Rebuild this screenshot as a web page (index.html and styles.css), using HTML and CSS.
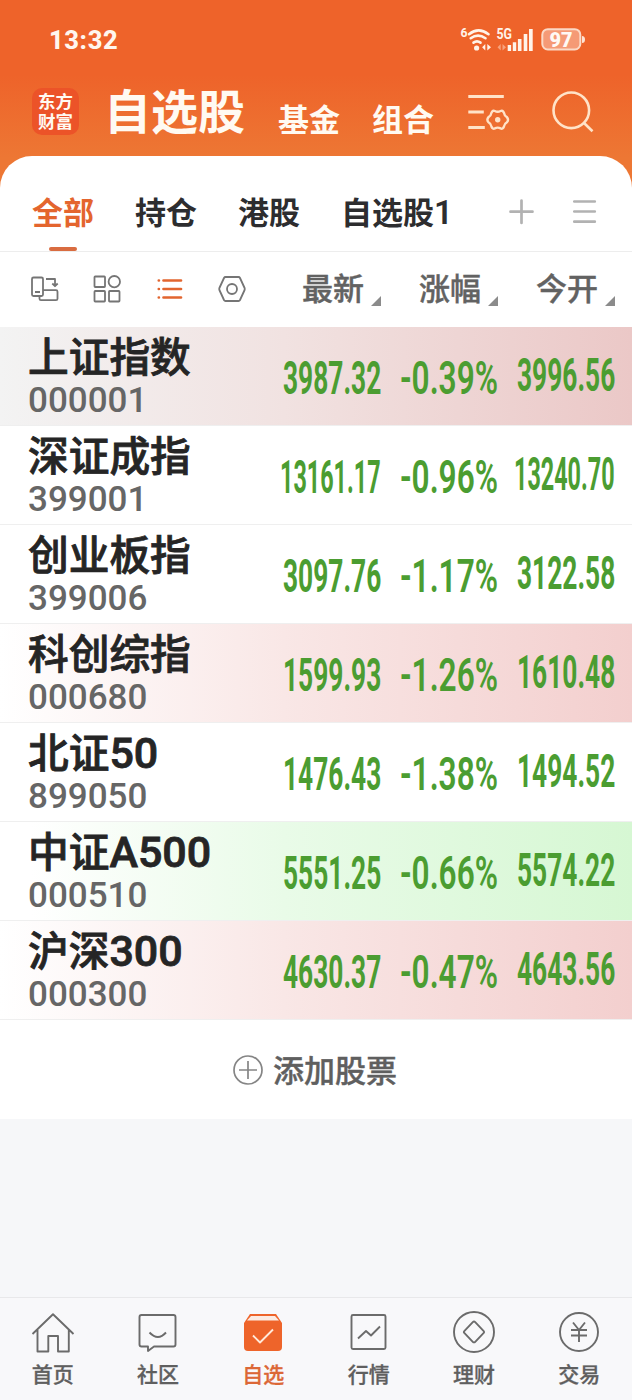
FILE: index.html
```html
<!DOCTYPE html>
<html lang="zh-CN">
<head>
<meta charset="utf-8">
<title>自选股</title>
<link rel="stylesheet" href="styles.css">
</head>
<body>
<div class="app">
  <header class="top">
    <div class="status">
      <span class="clock">13:32</span>
      <svg class="status-icons" width="130" height="32" viewBox="458 24 130 32">
        <g fill="none" stroke="#fff3e9" stroke-width="2.6" stroke-linecap="round">
          <path d="M469 34.2Q478.500 26.500 488.500 34.200"/><path d="M470.700 38.200Q478 33 485.500 38.200"/><path d="M473.500 42.600Q477 40 480.500 42.600"/>
        </g>
        <circle cx="476.600" cy="48" r="2.600" fill="#fff3e9"/>
        <path d="M485.300 44v6.500l-3.200-3.300M487.300 50.500V44l3.700 3.300z" fill="#fff3e9"/>
        <path d="M500.700 44v6.500l-3.200-3.300M502.500 50.500V44l3.500 3.300z" fill="#f7a27c"/>
        <text class="sig" x="460.500" y="37.200" font-size="12.500" textLength="7" lengthAdjust="spacingAndGlyphs">6</text>
        <text class="sig" x="496.500" y="39.200" font-size="14.500" textLength="15.500" lengthAdjust="spacingAndGlyphs">5G</text>
        <path d="M507.700 45h3.400v6h-3.400zM512.800 42.300h3.400V51h-3.400zM517.900 39h3.600v12h-3.600zM523.700 34h3.600v17h-3.600zM529 29h3.700v22H529z" fill="#fff3e9"/>
        <rect x="542.300" y="29.200" width="38" height="20.300" rx="5.500" fill="#f59a76" stroke="#fbd9c6" stroke-width="2"/>
        <path d="M582 36q3 0 3 3.500t-3 3.500z" fill="#fde3d4"/>
        <text class="batt" x="549.500" y="46.500" font-size="20" textLength="23" lengthAdjust="spacingAndGlyphs">97</text>
      </svg>
    </div>
    <div class="titlebar">
      <div class="logo"><span>东方</span><span>财富</span></div>
      <h1>自选股</h1>
      <span class="sub">基金</span>
      <span class="sub sub-2">组合</span>
      <svg class="ic-filter" width="44" height="42" viewBox="466 92 44 42" fill="none" stroke="#ffe3c8" stroke-width="2.800">
        <path d="M468.300 96.500h35.500M468.300 112h15.500M468.300 127.500h16.500"/>
        <path d="M491.500 112.700q1.200-2.700 3.300-1.700 2.900 1.500 5.800 0 2.100-1 3.300 1.700.4 3 3 4.400 2.200 2.600 0 5.200-2.600 1.400-3 4.400-1.200 2.700-3.300 1.700-2.900-1.500-5.800 0-2.100 1-3.300-1.700-.4-3-3-4.400-2.200-2.600 0-5.200 2.600-1.400 3-4.400z" stroke-width="2.400"/>
        <circle cx="497.700" cy="119.700" r="2.700" fill="#ffe3c8" stroke="none"/>
      </svg>
      <svg class="ic-search" width="46" height="46" viewBox="550 89 46 46" fill="none" stroke="#ffe3c8" stroke-width="2.600">
        <circle cx="571.300" cy="110.300" r="17.800"/><path d="M583.500 122.500l9 8.800"/>
      </svg>
    </div>
  </header>

  <main class="card">
    <nav class="tabs">
      <span class="tab active">全部</span><span class="tab">持仓</span><span class="tab">港股</span><span class="tab">自选股<span class="one">1</span></span>
      <svg class="tab-tools" width="92" height="30" viewBox="506 197 92 30" fill="none" stroke="#b2b2b2" stroke-width="2.700" stroke-linecap="round">
        <path d="M510.500 211.700h22M521.500 200.500v22.500M574.300 201.500h20.500M574.300 211.500h20.500M574.300 221.700h20.500"/>
      </svg>
    </nav>

    <div class="columns">
      <svg class="views" width="220" height="34" viewBox="28 272 220 34" fill="none" stroke="#757575" stroke-width="1.800" stroke-linejoin="round">
        <rect x="32" y="277.500" width="11" height="18.500" rx="1.500"/><path d="M35 292h5" stroke-width="2"/>
        <path d="M46 279h9v6.500M52.300 283.500l2.700 2.700 2.700-2.700M47.500 290.200h8.500q1.500 0 1.500 1.500v7q0 1.500-1.500 1.500H41q-1.500 0-1.500-1.500V296M43 290.200h4.500"/>
        <rect x="94.500" y="276.500" width="10.500" height="10.500" rx=".7"/><circle cx="114.300" cy="281.700" r="5.700"/><rect x="94.500" y="291" width="10.500" height="10.500" rx=".7"/><rect x="109" y="291" width="10.500" height="10.500" rx=".7"/>
        <g stroke="#e2652f" stroke-width="2.700" stroke-linecap="round"><path d="M163.500 280.500h17.500M163.500 289h17.500M163.500 297.500h17.500M158.800 280.500h.1M158.800 289h.1M158.800 297.500h.1"/></g>
        <path d="M225.500 277h13q1 0 1.500 1l4.600 10q.4 1 0 2l-4.600 10q-.5 1-1.500 1h-13q-1 0-1.500-1l-4.600-10q-.4-1 0-2l4.600-10q.5-1 1.500-1z"/><circle cx="232" cy="289" r="5"/>
      </svg>
      <span class="col">最新</span><span class="col">涨幅</span><span class="col">今开</span>
    </div>

    <section class="list">
      <article class="row tint-gray"><div class="id"><b>上证指数</b><i>000001</i></div>
        <span class="num">3987.32</span><span class="num pct">-0.39%</span><span class="num open">3996.56</span></article>
      <article class="row"><div class="id"><b>深证成指</b><i>399001</i></div>
        <span class="num long">13161.17</span><span class="num pct">-0.96%</span><span class="num open long">13240.70</span></article>
      <article class="row"><div class="id"><b>创业板指</b><i>399006</i></div>
        <span class="num">3097.76</span><span class="num pct">-1.17%</span><span class="num open">3122.58</span></article>
      <article class="row tint-red"><div class="id"><b>科创综指</b><i>000680</i></div>
        <span class="num">1599.93</span><span class="num pct">-1.26%</span><span class="num open">1610.48</span></article>
      <article class="row"><div class="id"><b>北证<span class="lat">50</span></b><i>899050</i></div>
        <span class="num">1476.43</span><span class="num pct">-1.38%</span><span class="num open">1494.52</span></article>
      <article class="row tint-green"><div class="id"><b>中证<span class="lat">A500</span></b><i>000510</i></div>
        <span class="num">5551.25</span><span class="num pct">-0.66%</span><span class="num open">5574.22</span></article>
      <article class="row tint-red"><div class="id"><b>沪深<span class="lat">300</span></b><i>000300</i></div>
        <span class="num">4630.37</span><span class="num pct">-0.47%</span><span class="num open">4643.56</span></article>
    </section>

    <div class="add">
      <svg width="32" height="32" viewBox="0 0 32 32" fill="none" stroke="#858585" stroke-width="1.700"><circle cx="16" cy="16" r="14"/><path d="M7 16h18M16 7v18"/></svg>
      <span>添加股票</span>
    </div>
  </main>

  <footer class="bottom">
    <div class="item"><svg width="44" height="44" viewBox="0 0 44 44"><path d="M1.500 24L22 4.300 42.500 24M6.500 20v21.500h10.800V26H27v15.500h10.800V20"/></svg><span>首页</span></div>
    <div class="item"><svg width="44" height="44" viewBox="0 0 44 44"><path d="M5.500 5h32q2 0 2 2v27.500q0 2-2 2H18l-6 4.500v-4.500H5.500q-2 0-2-2V7q0-2 2-2z"/><path d="M13.500 22.500q8.500 9 16.500 0"/></svg><span>社区</span></div>
    <div class="item on"><svg width="44" height="44" viewBox="0 0 44 44"><path d="M3 13L9 4h26l6 9v24q0 4-4 4H7q-4 0-4-4z" fill="#ee642a" stroke="none"/><path d="M6 10.500L10 6h24l4 4.500z" fill="#fcebe2" stroke="none"/><path d="M12 25.500l7 7 13-13" stroke="#ffe9da"/></svg><span>自选</span></div>
    <div class="item"><svg width="44" height="44" viewBox="0 0 44 44"><rect x="4.500" y="5" width="34" height="34" rx="1.500"/><path d="M11 28.500l8-7.500 5 4.500 9-9"/></svg><span>行情</span></div>
    <div class="item"><svg width="44" height="44" viewBox="0 0 44 44"><circle cx="22" cy="22" r="20"/><path d="M20.800 12.200q1.200-1.200 2.400 0l8.300 8.600q1.200 1.200 0 2.400l-8.300 8.600q-1.200 1.200-2.400 0l-8.300-8.600q-1.200-1.200 0-2.400z"/></svg><span>理财</span></div>
    <div class="item"><svg width="44" height="44" viewBox="0 0 44 44"><circle cx="22" cy="22" r="19"/><path d="M16 12.500l6 7.500 6-7.500M14 20h16M14 25.500h16M22 20v12"/></svg><span>交易</span></div>
  </footer>
</div>
</body>
</html>
```
FILE: styles.css
```css
* { box-sizing: border-box; }
body {
  margin: 0;
  background: #f6f7f9;
  font-family: "Noto Sans CJK SC", sans-serif;
}
.app {
  width: 632px;
  height: 1400px;
  overflow: hidden;
  display: flex;
  flex-direction: column;
  background: linear-gradient(#ee632a 0, #ee632a 75px, #ed7734 158px, #ed7734 200px, #f6f7f9 200px);
}
svg { display: block; flex: none; }
.top { height: 156px; color: #fffaf2; }
.status {
  height: 80px;
  padding: 24px 44px 24px 49px;
  display: flex;
  justify-content: space-between;
  align-items: center;
}
.clock {
  font: 800 25.5px/32px Roboto, sans-serif;
  letter-spacing: 0.6px;
  color: #fff6ee;
}
.sig { font-family: Roboto, sans-serif; font-weight: 700; fill: #fff3e9; }
.batt { font-family: Roboto, sans-serif; font-weight: 900; fill: #fff9f4; }
.titlebar {
  height: 76px;
  padding-left: 32px;
  display: flex;
  align-items: flex-start;
}
.logo {
  width: 47px;
  height: 47px;
  margin-top: 8px;
  padding-top: 3px;
  border-radius: 10px;
  background: #ec5328;
  display: flex;
  flex-direction: column;
  align-items: center;
  font-weight: 700;
  font-size: 17.5px;
  line-height: 20px;
}
h1 {
  margin: -2px 0 0 25px;
  font-size: 47px;
  line-height: 62px;
  font-weight: 700;
}
.sub {
  margin: 18px 0 0 33px;
  font-size: 31px;
  line-height: 40px;
  font-weight: 700;
}
.sub-2 { margin-left: 32px; }
.ic-filter { margin: 12px 0 0 32px; }
.ic-search { margin: 9px 0 0 40px; }

.card {
  background: #fff;
  border-radius: 32px 32px 0 0;
  height: 963px;
}
.tabs {
  height: 96px;
  padding: 33px 0 0 32px;
  border-bottom: 1px solid #ededed;
  display: flex;
  font-size: 31px;
  line-height: 44px;
  font-weight: 700;
  color: #2d2d2f;
}
.tab { margin-right: 41px; height: 63px; }
.active {
  color: #e4652e;
  display: flex;
  flex-direction: column;
  align-items: center;
}
.active::after {
  content: "";
  width: 28px;
  height: 4px;
  margin-top: 14px;
  border-radius: 2px;
  background: #d96c40;
}
.one { font-family: Roboto, sans-serif; font-size: 33px; font-weight: 600; }
.tab-tools { margin: 8px 0 0 12px; }
.columns {
  height: 75px;
  padding: 0 17px 0 28px;
  display: flex;
  align-items: flex-start;
}
.views { margin: 20px 54px 0 0; }
.col {
  width: 117px;
  margin-top: 13px;
  font-size: 31px;
  line-height: 44px;
  font-weight: 500;
  -webkit-text-stroke: 0.4px;
  color: #626262;
  display: flex;
  align-items: flex-end;
  flex: none;
}
.col::after {
  content: "";
  margin: 0 0 3px 7px;
  border-left: 10px solid transparent;
  border-bottom: 10px solid #8b8b8b;
}
.row {
  height: 99px;
  padding-left: 28px;
  border-bottom: 1px solid #efefef;
  display: grid;
  grid-template-columns: 255px 117px 117px 99px;
}
.tint-gray { background: linear-gradient(90deg, #f3f3f3, #f1e2e1 45%, #ebc8c7); }
.tint-red { background: linear-gradient(90deg, #fff, #f9e7e6 45%, #f3cfce); }
.tint-green { background: linear-gradient(90deg, #fff 5%, #e9fbe8 45%, #d6f7d3); }
.id { display: flex; flex-direction: column; }
.id b {
  height: 57px;
  font-size: 40.7px;
  line-height: 55px;
  font-weight: 500;
  -webkit-text-stroke: 0.8px;
  color: #252525;
  white-space: nowrap;
}
.id .lat {
  font-family: Roboto, sans-serif;
  font-size: 43px;
  font-weight: 500;
}
.id i {
  font: 500 35px/33px Roboto, sans-serif;
  color: #666;
}
.num {
  width: max-content;
  margin-top: 27px;
  font: 700 47px/47px Roboto, sans-serif;
  color: #4b9d31;
  white-space: nowrap;
  transform: scaleX(0.56);
  transform-origin: 0 0;
}
.num.long { margin-left: -3px; transform: scaleX(0.497); }
.num.pct { font-weight: 600; transform: scaleX(0.672); }
.num.open { margin-top: 24px; }
.add {
  height: 99px;
  padding-right: 3px;
  display: flex;
  align-items: center;
  justify-content: center;
  gap: 9px;
  font-size: 31px;
  font-weight: 500;
  -webkit-text-stroke: 0.4px;
  color: #5f5f5f;
}
.add span { margin-top: -2px; }
.bottom {
  margin-top: auto;
  height: 103px;
  border-top: 1px solid #e8e8ea;
  background: #f8f8fa;
  display: grid;
  grid-template-columns: repeat(6, 1fr);
}
.item {
  padding-top: 12px;
  display: flex;
  flex-direction: column;
  align-items: center;
  font-size: 21px;
  line-height: 38px;
  font-weight: 500;
  -webkit-text-stroke: 0.3px;
  color: #5f5f5f;
}
.item svg { fill: none; stroke: #6b6b6b; stroke-width: 1.9; stroke-linejoin: round; }
.on { color: #dc6736; }
```
